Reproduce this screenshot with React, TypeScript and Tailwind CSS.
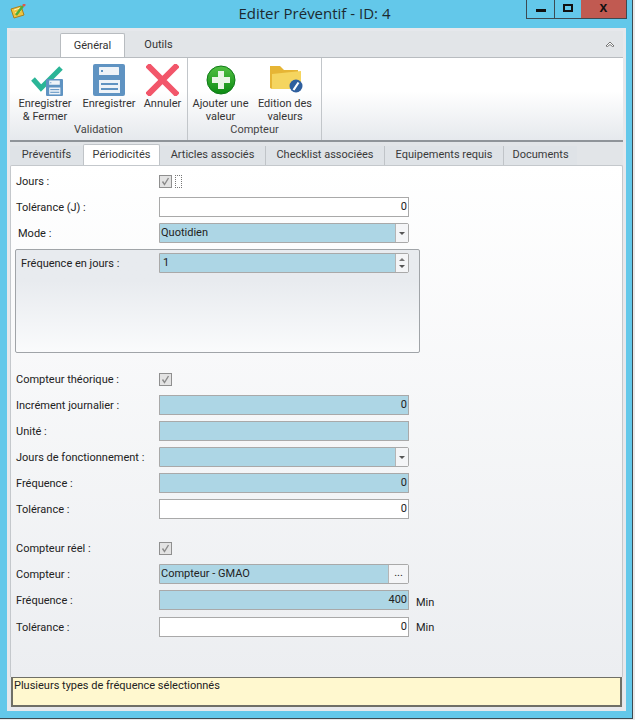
import React from "react"

const font = "font-['Roboto',sans-serif]"

const SaveIcon: React.FC<{ size: number }> = ({ size }) => (
  <svg width={size} height={size} viewBox="0 0 32 32">
    <rect x="0" y="0" width="32" height="32" rx="2" fill="#5f93c2" />
    <rect x="6" y="3" width="20" height="8" rx="0.5" fill="#eef3f8" />
    <rect x="8" y="6" width="2" height="2" fill="#5f93c2" />
    <rect x="6" y="16" width="21" height="13" fill="#eef3f8" />
    <rect x="8" y="19" width="17" height="2" fill="#5f93c2" />
    <rect x="8" y="24" width="17" height="2" fill="#5f93c2" />
  </svg>
)

const SaveCloseIcon = () => (
  <div className="relative w-[32px] h-[30px]">
    <svg width="32" height="30" viewBox="0 0 32 30" className="absolute left-0 top-0">
      <path d="M2 13 L10 22 L30 2" fill="none" stroke="#2bb597" strokeWidth="5" />
    </svg>
    <div className="absolute left-[15px] top-[13px]">
      <SaveIcon size={17} />
    </div>
  </div>
)

const CancelIcon = () => (
  <svg width="33" height="32" viewBox="0 0 33 32">
    <path d="M3.5 3 L29.5 29 M29.5 3 L3.5 29" stroke="#f2566a" strokeWidth="6" strokeLinecap="square" />
  </svg>
)

const AddIcon = () => (
  <svg width="30" height="30" viewBox="0 0 30 30">
    <defs>
      <linearGradient id="addG" x1="0" y1="0" x2="0" y2="1">
        <stop offset="0" stopColor="#53c143" />
        <stop offset="1" stopColor="#0b8a12" />
      </linearGradient>
    </defs>
    <circle cx="15" cy="15" r="14" fill="url(#addG)" stroke="#0f7a18" strokeWidth="1" />
    <path d="M12 6 H18 V12 H24 V18 H18 V24 H12 V18 H6 V12 H12 Z" fill="#eaf5e6" />
  </svg>
)

const FolderIcon = () => (
  <svg width="34" height="28" viewBox="0 0 34 28">
    <path d="M1 1 H11 L15 5 H29 V9 H1 Z" fill="#e6b535" />
    <path d="M3 9 L32 6 V24 H3 Z" fill="#f5d55f" />
    <path d="M1 1 V23 L3 24 V9 Z" fill="#e6b535" />
    <circle cx="27" cy="21" r="6.5" fill="#2f5f9e" />
    <path d="M24.5 25 L29.5 17.5" stroke="#fff" strokeWidth="2.2" />
  </svg>
)

const WindowIcon = () => (
  <svg width="16" height="16" viewBox="0 0 16 16">
    <path d="M1 5 L11 2 L14 11 L4 14 Z" fill="#f0c43f" stroke="#a8801f" strokeWidth="1" />
    <path d="M4 6 L10 4 M5 9 L11 7" stroke="#fff3b5" strokeWidth="1" />
    <path d="M6 11 L13 2" stroke="#4fae3b" strokeWidth="2.5" />
    <path d="M13 2 L15 0" stroke="#e0564c" strokeWidth="2.5" />
  </svg>
)

const RibbonButton: React.FC<{ icon: React.ReactNode; lines: string[]; width: string }> = ({ icon, lines, width }) => (
  <div className={`flex flex-col items-center ${width}`}>
    <div className="h-[38px] flex items-end justify-center">{icon}</div>
    <div className="mt-[1px] text-center text-[11px] leading-[13px] text-[#333] whitespace-nowrap">
      {lines.map(l => (
        <div key={l}>{l}</div>
      ))}
    </div>
  </div>
)

const Row: React.FC<{ label: string; top: string; indent?: string; children: React.ReactNode }> = ({ label, top, indent = "pl-[5px]", children }) => (
  <div className={`flex items-center h-[20px] ${top}`}>
    <div className={`w-[148px] shrink-0 text-[11px] text-[#222] whitespace-nowrap pt-[2px] ${indent}`}>{label}</div>
    {children}
  </div>
)

const Field: React.FC<{ value?: string; blue?: boolean; right?: boolean }> = ({ value = "", blue, right }) => (
  <div className={`w-[250px] h-[20px] border border-[#a9a9a9] px-[1px] text-[11px] leading-[17px] text-[#222] ${blue ? "bg-[#add6e5]" : "bg-white"} ${right ? "text-right" : "text-left"}`}>
    {value}
  </div>
)

const Arrow = () => <div className="w-0 h-0 border-x-[3px] border-x-transparent border-t-[3px] border-t-[#555]" />

const Combo: React.FC<{ value?: string }> = ({ value = "" }) => (
  <div className="flex w-[250px] h-[20px] border border-[#a9a9a9] rounded-r-[2px] text-[11px] leading-[17px] text-[#222]">
    <div className="flex-1 bg-[#add6e5] px-[1px]">{value}</div>
    <div className="w-[13px] bg-[#f4f5f7] border-l border-[#b5b5b5] flex items-center justify-center">
      <Arrow />
    </div>
  </div>
)

const Check = () => (
  <div className="w-[13px] h-[13px] border border-[#8f8f8f] bg-[#e3e3e3] flex items-center justify-center">
    <svg width="9" height="9" viewBox="0 0 9 9">
      <path d="M1.5 4.5 L3.5 7.5 L7.5 1" fill="none" stroke="#8a8a8a" strokeWidth="1.4" />
    </svg>
  </div>
)

const tabClass = "h-[19px] text-center leading-[18px] bg-[#dfe3e7]"

const App: React.FC = () => {
  return (
    <div className={`w-[635px] h-[720px] bg-[#e9e9e9] ${font}`}>
      <div className="w-[633px] h-[719px] bg-[#63c8ea] border-r border-b border-[#3c4a52] flex flex-col pl-[7px] pr-[6px]">
        {/* title bar */}
        <div className="h-[28px] shrink-0 flex items-start -mr-[1px]">
          <div className="w-[19px] pt-[4px] pl-[3px] shrink-0">
            <WindowIcon />
          </div>
          <div className="flex-1 text-center pl-[77px] text-[15px] leading-[26px] text-[#1c2a30] font-['Open_Sans',sans-serif] whitespace-nowrap">Editer Préventif - ID: 4</div>
          <div className="flex h-[19px] shrink-0 border border-t-0 border-[#3c4a52]">
            <div className="w-[28px] flex items-center justify-center border-r border-[#3c4a52]">
              <div className="w-[10px] h-[3px] bg-[#111] mt-[3px]" />
            </div>
            <div className="w-[26px] flex items-center justify-center">
              <div className="w-[10px] h-[8px] border-2 border-[#111] mb-[3px]" />
            </div>
            <div className="w-[45px] bg-[#c15a51] flex items-center justify-center text-[14px] font-bold text-[#111] font-['Liberation_Sans',sans-serif] leading-none pb-[4px]">x</div>
          </div>
        </div>

        <div className="h-[683px] shrink-0 flex flex-col bg-[#e2e5e8] border-[3px] border-b-[4px] border-[#e6e8ec]">
          {/* ribbon tabs */}
          <div className="h-[26px] shrink-0 flex items-end pl-[50px] justify-between pr-[8px]">
            <div className="flex items-end">
              <div className="w-[65px] h-[24px] bg-white border border-b-0 border-[#b8bcc0] rounded-t-[2px] text-center text-[11px] leading-[23px] text-[#333]">Général</div>
              <div className="w-[67px] h-[24px] text-center text-[11px] leading-[23px] text-[#333]">Outils</div>
            </div>
            <svg width="10" height="8" viewBox="0 0 10 8" className="mb-[9px]">
              <path d="M1 6 L5 2 L9 6 L7.5 6.5 L5 4.5 L2.5 6.5 Z" fill="#fff" stroke="#555" strokeWidth="0.8" />
            </svg>
          </div>

          {/* ribbon */}
          <div className="h-[85px] shrink-0 flex bg-gradient-to-b from-white from-40% to-[#e6e9ed] border-t border-[#b8bcc0] border-b-2 border-b-[#8f9499]">
            <div className="w-[178px] flex flex-col border-r border-[#c2c6ca]">
              <div className="flex flex-1">
                <RibbonButton width="w-[70px]" icon={<div className="pl-[4px]"><SaveCloseIcon /></div>} lines={["Enregistrer", "& Fermer"]} />
                <RibbonButton width="w-[58px]" icon={<SaveIcon size={32} />} lines={["Enregistrer"]} />
                <RibbonButton width="w-[49px]" icon={<CancelIcon />} lines={["Annuler"]} />
              </div>
              <div className="h-[19px] text-center text-[11px] leading-[14px] text-[#444]">Validation</div>
            </div>
            <div className="w-[134px] flex flex-col border-r border-[#c2c6ca]">
              <div className="flex flex-1">
                <RibbonButton width="w-[65px]" icon={<div className="mb-[1px]"><AddIcon /></div>} lines={["Ajouter une", "valeur"]} />
                <RibbonButton width="w-[64px]" icon={<div className="mb-[3px] pl-[2px]"><FolderIcon /></div>} lines={["Edition des", "valeurs"]} />
              </div>
              <div className="h-[19px] text-center text-[11px] leading-[14px] text-[#444]">Compteur</div>
            </div>
          </div>

          {/* page tabs */}
          <div className="h-[23px] shrink-0 flex items-end text-[11px] text-[#3a3a3a]">
            <div className={`w-[73px] ${tabClass}`}>Préventifs</div>
            <div className="w-[77px] h-[21px] text-center leading-[20px] bg-white border border-b-0 border-[#c0c4c8] rounded-t-[2px]">Périodicités</div>
            <div className={`w-[106px] border-r border-[#c0c4c8] ${tabClass}`}>Articles associés</div>
            <div className={`w-[119px] border-r border-[#c0c4c8] ${tabClass}`}>Checklist associées</div>
            <div className={`w-[119px] border-r border-[#c0c4c8] ${tabClass}`}>Equipements requis</div>
            <div className={`w-[73px] ${tabClass}`}>Documents</div>
          </div>

          {/* form */}
          <div className="flex-1 border border-[#c4c8cc] border-b-0 rounded-t-[2px] bg-gradient-to-b from-white to-[#eceef1]">
            <Row label="Jours :" top="mt-[5px]">
              <Check />
              <div className="w-[7px] h-[13px] ml-[3px] border border-dotted border-[#777]" />
            </Row>
            <Row label="Tolérance (J) :" top="mt-[6px]">
              <Field value="0" right />
            </Row>
            <Row label="Mode :" top="mt-[6px]" indent="pl-[7px]">
              <Combo value="Quotidien" />
            </Row>
            <div className="ml-[4px] mt-[6px] w-[405px] h-[104px] rounded-[2px] border border-[#a0a4a8] bg-gradient-to-b from-[#e8ebef] from-30% to-[#fafbfc] pt-[3px]">
              <div className="flex items-center h-[20px]">
                <div className="w-[143px] pl-[5px] pt-[2px] text-[11px] text-[#222] whitespace-nowrap">Fréquence en jours :</div>
                <div className="flex w-[250px] h-[20px] border border-[#a9a9a9] rounded-r-[2px] text-[11px] leading-[17px] text-[#222]">
                  <div className="flex-1 bg-[#add6e5] px-[3px]">1</div>
                  <div className="w-[13px] bg-[#f4f5f7] border-l border-[#b5b5b5] flex flex-col gap-[4px] items-center justify-center">
                    <div className="w-0 h-0 border-x-[3px] border-x-transparent border-b-[3px] border-b-[#777]" />
                    <Arrow />
                  </div>
                </div>
              </div>
            </div>

            <Row label="Compteur théorique :" top="mt-[16px]">
              <Check />
            </Row>
            <Row label="Incrément journalier :" top="mt-[6px]">
              <Field value="0" blue right />
            </Row>
            <Row label="Unité :" top="mt-[6px]">
              <Field blue />
            </Row>
            <Row label="Jours de fonctionnement :" top="mt-[6px]">
              <Combo />
            </Row>
            <Row label="Fréquence :" top="mt-[6px]">
              <Field value="0" blue right />
            </Row>
            <Row label="Tolérance :" top="mt-[6px]">
              <Field value="0" right />
            </Row>

            <Row label="Compteur réel :" top="mt-[19px]">
              <Check />
            </Row>
            <Row label="Compteur :" top="mt-[6px]">
              <div className="flex w-[250px] h-[20px] border border-[#a9a9a9] rounded-r-[2px] text-[11px] leading-[17px] text-[#222]">
                <div className="flex-1 bg-[#add6e5] px-[1px]">Compteur - GMAO</div>
                <div className="w-[20px] bg-[#f4f5f7] border-l border-[#b5b5b5] text-center leading-[16px]">...</div>
              </div>
            </Row>
            <Row label="Fréquence :" top="mt-[6px]">
              <Field value="400" blue right />
              <div className="ml-[7px] text-[11px] text-[#222] mt-[7px]">Min</div>
            </Row>
            <Row label="Tolérance :" top="mt-[7px]">
              <Field value="0" right />
              <div className="ml-[7px] text-[11px] text-[#222] mt-[2px]">Min</div>
            </Row>
          </div>

          {/* status */}
          <div className="h-[30px] shrink-0 bg-[#fff8cf] border-2 border-t border-[#6f6f66] px-[1px] text-[11px] leading-[15px] text-[#222] mx-[1px]">
            Plusieurs types de fréquence sélectionnés
          </div>
        </div>
      </div>
    </div>
  )
}

export default App
